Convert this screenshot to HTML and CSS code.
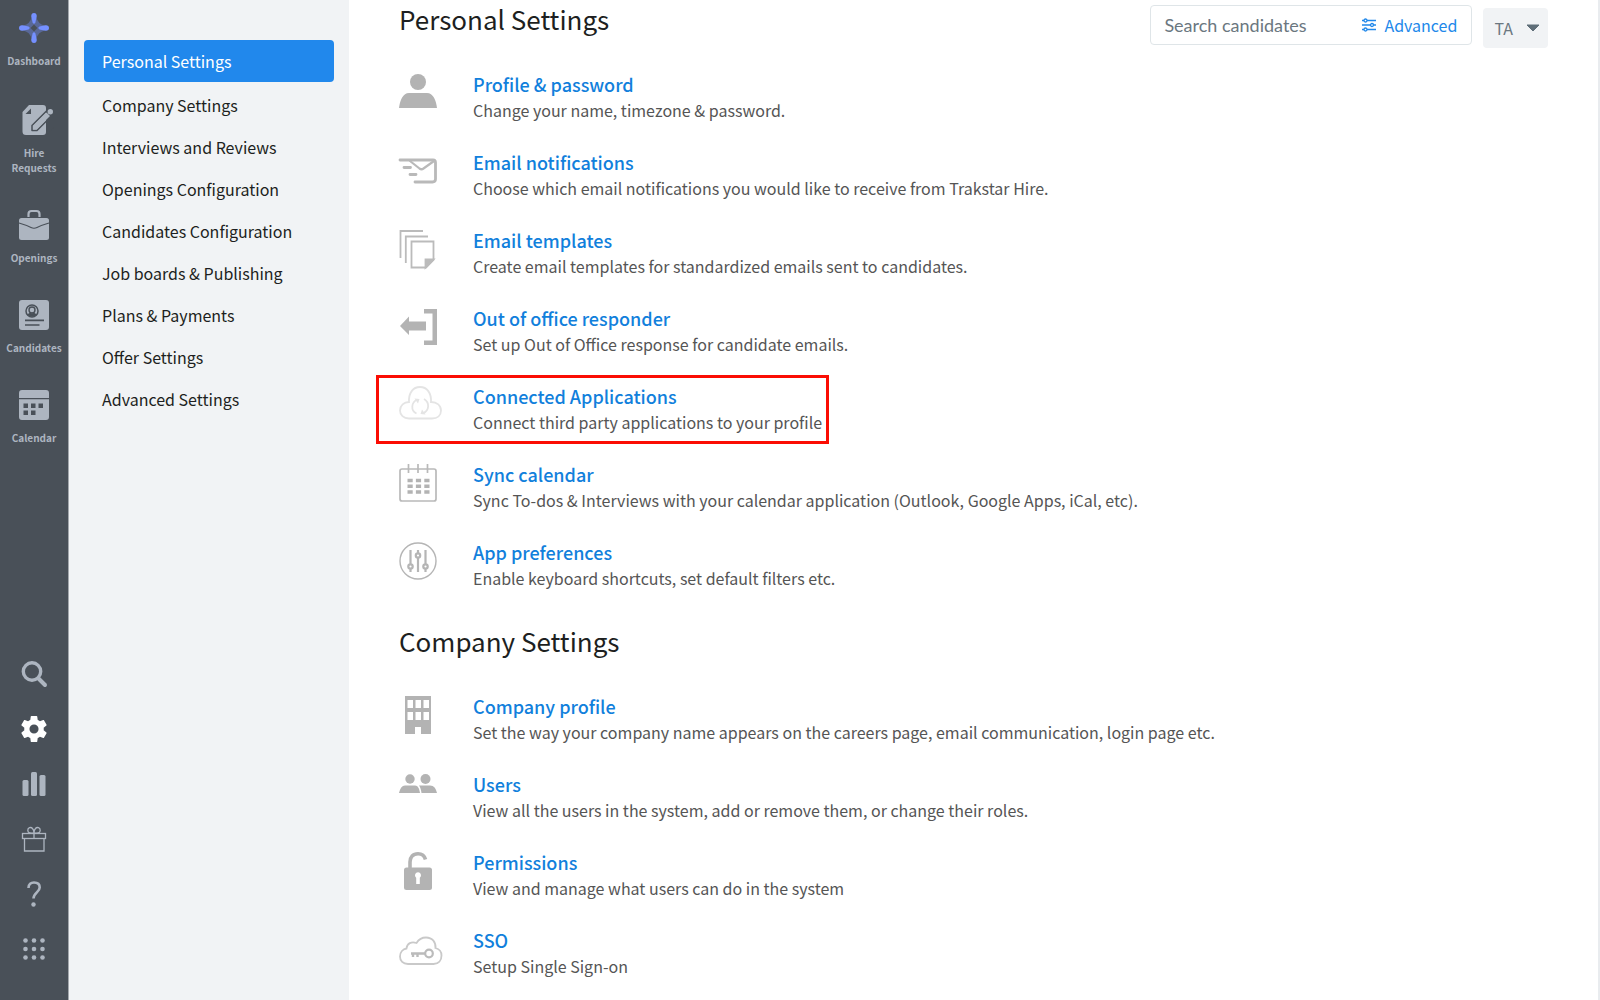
FILE: index.html
```html
<!DOCTYPE html>
<html lang="en">
<head>
<meta charset="UTF-8" />
<meta name="viewport" content="width=device-width, initial-scale=1" />
<title>Settings</title>
<link rel="stylesheet" href="styles.css">
</head>
<body>
  <nav class="rail" aria-label="Main">
    <ul class="rail-main">
      <li class="rail-home">
        <a href="#">
          <svg class="rail-icon" viewBox="0 0 30 30">
            <path d="M15 5Q17 13 25 15Q17 17 15 25Q13 17 5 15Q13 13 15 5Z" fill="#596898" stroke="#596898" stroke-width="5" stroke-linejoin="round"/>
            <path d="M15 11.500L18.500 15L15 18.500L11.500 15Z" fill="#495058"/>
            <g fill="#7590ff">
              <path d="M15 0c2 0 3 1.600 2.700 3.500L16.400 9.500Q15 12 13.600 9.500L12.300 3.500C12 1.600 13 0 15 0z"/>
              <path d="M15 30c2 0 3-1.600 2.700-3.500L16.400 20.500Q15 18 13.600 20.500L12.300 26.500C12 28.400 13 30 15 30z"/>
              <path d="M0 15c0-2 1.600-3 3.500-2.700L9.500 13.600Q12 15 9.500 16.400L3.500 17.700C1.600 18 0 17 0 15z"/>
              <path d="M30 15c0-2-1.600-3-3.500-2.700L20.500 13.600Q18 15 20.500 16.400L26.500 17.700C28.400 18 30 17 30 15z"/>
            </g>
          </svg>
          <span>Dashboard</span>
        </a>
      </li>
      <li>
        <a href="#">
          <svg class="rail-icon" viewBox="0 0 30 30">
            <path d="M10 0h14a3 3 0 0 1 3 3v24a3 3 0 0 1-3 3H7a3.500 3.500 0 0 1-3.500-3.500V7z" fill="#adb5c0"/>
            <path d="M6.500 9L12 3.500V9z" fill="#495058"/>
            <path d="M13 25.500v-5L29 4.500l5 5L18 25.500z" fill="#adb5c0" stroke="#495058" stroke-width="1.500" stroke-linejoin="round"/>
            <path d="M27 11.500V30l9-8V9L30 3h-3z" fill="#495058"/>
            <path d="M14 24.500v-3.500L27.500 7.500l3.500 3.500L17.500 24.500z" fill="#adb5c0"/>
            <circle cx="31.300" cy="6.700" r="2.700" fill="#adb5c0"/>
          </svg>
          <span>Hire Requests</span>
        </a>
      </li>
      <li>
        <a href="#">
          <svg class="rail-icon" viewBox="0 0 30 30">
            <path d="M9.500 7V4a3 3 0 0 1 3-3h5a3 3 0 0 1 3 3v3" fill="none" stroke="#adb5c0" stroke-width="2.200"/>
            <rect y="8" width="30" height="22" rx="2.500" fill="#adb5c0"/>
            <path d="M0 13Q7 15 12 17.500Q15 19 18 17.500Q23 15 30 13" fill="none" stroke="#495058" stroke-width="1.200"/>
          </svg>
          <span>Openings</span>
        </a>
      </li>
      <li>
        <a href="#">
          <svg class="rail-icon" viewBox="0 0 30 30">
            <rect width="30" height="30" rx="3" fill="#adb5c0"/>
            <circle cx="13" cy="11" r="6" fill="none" stroke="#495058" stroke-width="1.500"/>
            <circle cx="13" cy="10" r="3" fill="none" stroke="#495058" stroke-width="1.400"/>
            <path d="M8.500 15Q9 13 11.500 12.500l1.500 1 1.500-1Q17 13 17.500 15Q13 18.500 8.500 15z" fill="#495058"/>
            <path d="M6 20.300h19M6 25h14.500" stroke="#495058" stroke-width="1.700"/>
          </svg>
          <span>Candidates</span>
        </a>
      </li>
      <li>
        <a href="#">
          <svg class="rail-icon" viewBox="0 0 30 30">
            <path d="M0 8V3a3 3 0 0 1 3-3h24a3 3 0 0 1 3 3v5zM0 9.300h30V27a3 3 0 0 1-3 3H3a3 3 0 0 1-3-3z" fill="#adb5c0"/>
            <path d="M4.500 13.500H9V18H4.500zM12 13.500h4.500V18H12zM19.500 13.500H24V18h-4.500zM4.500 20.500H9V25H4.500zM12 20.500h4.500V25H12z" fill="#495058"/>
          </svg>
          <span>Calendar</span>
        </a>
      </li>
    </ul>
    <ul class="rail-tools">
      <li><a href="#" aria-label="Search">
        <svg viewBox="0 0 26 26" fill="none" stroke="#adb5c0"><circle cx="11" cy="10.500" r="8.700" stroke-width="3.400"/><path d="M17.500 17.500L24 24" stroke-width="4" stroke-linecap="round"/></svg>
      </a></li>
      <li><a href="#" aria-label="Settings">
        <svg viewBox="2 2 20 20" fill="#fff"><path d="M19.430 12.980c.04-.32.07-.64.07-.98s-.03-.66-.07-.98l2.110-1.650c.19-.15.24-.42.12-.64l-2-3.460c-.12-.22-.39-.3-.61-.22l-2.490 1c-.52-.4-1.080-.73-1.690-.98l-.38-2.650C14.460 2.180 14.250 2 14 2h-4c-.25 0-.46.18-.49.42l-.38 2.650c-.61.25-1.170.59-1.690.98l-2.490-1c-.23-.09-.49 0-.61.22l-2 3.460c-.13.22-.07.49.12.64l2.110 1.650c-.04.32-.07.65-.07.98s.03.66.07.98l-2.110 1.650c-.19.15-.24.42-.12.64l2 3.460c.12.22.39.3.61.22l2.490-1c.52.4 1.080.73 1.690.98l.38 2.650c.03.24.24.42.49.42h4c.25 0 .46-.18.49-.42l.38-2.650c.61-.25 1.170-.59 1.690-.98l2.490 1c.23.09.49 0 .61-.22l2-3.460c.12-.22.07-.49-.12-.64l-2.110-1.650zM12 15.500a3.500 3.500 0 1 1 0-7 3.500 3.500 0 0 1 0 7z"/></svg>
      </a></li>
      <li><a href="#" aria-label="Reports">
        <svg viewBox="0 0 26 26" fill="#adb5c0"><rect x="1.500" y="9" width="6" height="16" rx="1.500"/><rect x="10" y="1" width="6" height="24" rx="1.500"/><rect x="18.500" y="4" width="6" height="21" rx="1.500"/></svg>
      </a></li>
      <li><a href="#" aria-label="What's new">
        <svg viewBox="0 0 26 26" fill="none" stroke="#adb5c0" stroke-width="1.300"><rect x="1.500" y="7.500" width="23" height="5"/><path d="M3.500 12.500V25h19.500V12.500M13 7.500v5M13 7C11 7 7 8 6.800 4.500C6.600 1.500 10 .700 11.500 2.500C13 4 13 6 13 7zM13 7c2 0 6 1 6.200-2.500C19.400 1.500 16 .700 14.500 2.500C13 4 13 6 13 7z"/></svg>
      </a></li>
      <li><a href="#" aria-label="Help">
        <svg viewBox="0 0 26 26" fill="none" stroke="#adb5c0"><path d="M7.500 7C7.500 3 10 1.500 13 1.500c3.500 0 5.700 2 5.700 5c0 4.500-6.200 5.500-6.200 11" stroke-width="2.600"/><circle cx="12.500" cy="23.500" r="2.200" fill="#adb5c0" stroke="none"/></svg>
      </a></li>
      <li><a href="#" aria-label="Apps">
        <svg viewBox="0 0 26 26" fill="#adb5c0"><circle cx="4.500" cy="4.500" r="2.300"/><circle cx="13" cy="4.500" r="2.300"/><circle cx="21.500" cy="4.500" r="2.300"/><circle cx="4.500" cy="13" r="2.300"/><circle cx="13" cy="13" r="2.300"/><circle cx="21.500" cy="13" r="2.300"/><circle cx="4.500" cy="21.500" r="2.300"/><circle cx="13" cy="21.500" r="2.300"/><circle cx="21.500" cy="21.500" r="2.300"/></svg>
      </a></li>
    </ul>
  </nav>

  <nav class="side-menu" aria-label="Settings sections">
    <a class="active" href="#personal">Personal Settings</a>
    <a href="#company">Company Settings</a>
    <a href="#">Interviews and Reviews</a>
    <a href="#">Openings Configuration</a>
    <a href="#">Candidates Configuration</a>
    <a href="#">Job boards &amp; Publishing</a>
    <a href="#">Plans &amp; Payments</a>
    <a href="#">Offer Settings</a>
    <a href="#">Advanced Settings</a>
  </nav>

  <main class="content">
    <header class="topbar">
      <h2 id="personal">Personal Settings</h2>
      <div class="topbar-tools">
        <form class="search-box">
          <input type="text" name="q" placeholder="Search candidates" aria-label="Search candidates" />
          <a href="#">
            <svg viewBox="0 0 14 14" fill="none" stroke="#2188ea" stroke-width="1.300"><path d="M0 2.500h2M5 2.500h9M0 7h8.500M11.500 7H14M0 11.500h2M5 11.500h9"/><circle cx="3.500" cy="2.500" r="1.500"/><circle cx="10" cy="7" r="1.500"/><circle cx="3.500" cy="11.500" r="1.500"/></svg>
            Advanced
          </a>
        </form>
        <button type="button" class="user-btn">TA
          <svg viewBox="0 0 14 8"><path d="M1 1h12L7 7z" fill="#5f6e78" stroke="#5f6e78" stroke-linejoin="round"/></svg>
        </button>
      </div>
    </header>

    <ul class="settings-list">
      <li>
        <svg viewBox="0 0 44 38" fill="#b3b3b3"><circle cx="19" cy="8" r="8"/><path d="M0 34c1-8 4-15 10-15h18c6 0 9 7 10 15z"/></svg>
        <div><a href="#">Profile &amp; password</a><p>Change your name, timezone &amp; password.</p></div>
      </li>
      <li>
        <svg viewBox="0 0 44 38" fill="none" stroke="#b9b9b9" stroke-linecap="round"><path d="M1 8h33q2.500 0 2.500 2.500V27q0 3-3 3H16" stroke-width="2.800"/><path d="M11 9l9.500 7.500q2 1.500 4 0L35 9" stroke-width="2.200"/><path d="M5 15.500h6.500M11 22.500h6" stroke-width="2.800"/></svg>
        <div><a href="#">Email notifications</a><p>Choose which email notifications you would like to receive from Trakstar Hire.</p></div>
      </li>
      <li>
        <svg viewBox="0 0 44 38" fill="none" stroke="#bbb" stroke-width="1.800"><path d="M1.500 28V1H24M6.800 33V6.500H29"/><path d="M12.500 11.500h22V30L27 37.500H12.500z"/><path d="M26.500 37.500V29.500h8z" fill="#bbb"/></svg>
        <div><a href="#">Email templates</a><p>Create email templates for standardized emails sent to candidates.</p></div>
      </li>
      <li>
        <svg viewBox="0 0 44 38" fill="#b3b3b3"><path d="M1 18L10 8.500V13.500H27v9H10V27zM25 1h13v36H25v-4.500h8.500v-27H25z"/></svg>
        <div><a href="#">Out of office responder</a><p>Set up Out of Office response for candidate emails.</p></div>
      </li>
      <li class="highlight">
        <svg viewBox="0 0 44 38" fill="none" stroke="#e4e4e4" stroke-width="1.800"><path d="M10 32.500C4.500 32.500 1 29 1 24.500c0-5 4-8.500 9-8.500C9.500 7 14 1 21 1S32.500 7 32 16c6 0 10 3.500 10 8.500s-3.500 8-9 8z"/><path d="M18.500 13.500c-6.500 2.500-7 11.500-1 14M23.500 27.500c7-2.500 7.500-11 1.500-14.500"/><path d="M15.500 12.500l5 .5-1.500 4.500zM26.500 28.500l-5-.5 1.500-4.500z" fill="#e4e4e4" stroke="none"/></svg>
        <div><a href="#">Connected Applications</a><p>Connect third party applications to your profile</p></div>
      </li>
      <li>
        <svg viewBox="0 0 44 38"><rect x="1" y="5" width="36" height="32" rx="2" fill="none" stroke="#b9b9b9" stroke-width="1.700"/><path d="M9.500 0v9M19 0v9M28.500 0v9" stroke="#b9b9b9" stroke-width="1.700"/><path d="M8.500 16.500h22M8.500 22.300h22M8.500 28h22" stroke="#b3b3b3" stroke-width="3.400" stroke-dasharray="5.200 3.200"/></svg>
        <div><a href="#">Sync calendar</a><p>Sync To-dos &amp; Interviews with your calendar application (Outlook, Google Apps, iCal, etc).</p></div>
      </li>
      <li>
        <svg viewBox="0 0 44 38" fill="none" stroke="#b5b5b5"><circle cx="19" cy="19" r="18" stroke-width="1.400"/><g stroke-width="2.200"><path d="M11.500 8v14M11.500 27v3M19 8v3M19 16v14M26.500 8v14M26.500 27v3"/><circle cx="11.500" cy="24.500" r="2.200"/><circle cx="19" cy="13.500" r="2.200"/><circle cx="26.500" cy="24.500" r="2.200"/></g></svg>
        <div><a href="#">App preferences</a><p>Enable keyboard shortcuts, set default filters etc.</p></div>
      </li>
    </ul>

    <h2 id="company">Company Settings</h2>
    <ul class="settings-list">
      <li>
        <svg viewBox="0 0 44 38"><path d="M6 0h26v38H22v-7h-6v7H6zM8.500 4v8H14V4zM16.500 4v8H22V4zM24.500 4v8H30V4zM8.500 16v8H14v-8zM16.500 16v8H22v-8zM24.500 16v8H30v-8z" fill="#b3b3b3" fill-rule="evenodd"/></svg>
        <div><a href="#">Company profile</a><p>Set the way your company name appears on the careers page, email communication, login page etc.</p></div>
      </li>
      <li>
        <svg viewBox="0 0 44 38" fill="#b3b3b3"><circle cx="11" cy="5" r="4.700"/><circle cx="26.500" cy="5" r="5"/><path d="M0 19c1-4.500 3-7.500 6-7.500h10c3 0 4.500 3.500 5 7.500zM20 11.500h11c4 0 6 3 7 7.500H22.500c-.5-3-1-5.500-2.500-7.500z"/></svg>
        <div><a href="#">Users</a><p>View all the users in the system, add or remove them, or change their roles.</p></div>
      </li>
      <li>
        <svg viewBox="0 0 44 38"><path d="M11 16V10c0-5 3-8.300 8-8.300c4 0 6.500 2 7.500 5.800" fill="none" stroke="#b3b3b3" stroke-width="3.600"/><rect x="5" y="15.500" width="28" height="22.500" rx="2.500" fill="#b3b3b3"/><path d="M16 23.500a3 3 0 1 1 4.800 2.200V32h-3.600v-6.300A3 3 0 0 1 16 23.500z" fill="#fff"/></svg>
        <div><a href="#">Permissions</a><p>View and manage what users can do in the system</p></div>
      </li>
      <li>
        <svg viewBox="0 0 44 38" fill="none" stroke="#c9c9c9"><path d="M9 34C4 34 1 31 1 26.500c0-4.500 3-7.500 6.500-8c.5-5 5-7.500 10-5.500C20 9 23 7.500 27 7.500c6.500 0 10 5 9.500 10.500c4 1 6 4 6 7.500c0 5-3 8.500-8 8.500z" stroke-width="1.800"/><g stroke="#bbb"><circle cx="30" cy="23.500" r="3.800" stroke-width="2.200"/><path d="M26 23.500H12M14 23v4M18.500 23v4" stroke-width="2.400"/></g></svg>
        <div><a href="#">SSO</a><p>Setup Single Sign-on</p></div>
      </li>
    </ul>
  </main>
</body>
</html>
```
FILE: styles.css
```css
* {
  box-sizing: border-box;
}
body {
  margin: 0;
  min-height: 100vh;
  display: flex;
  background: #fff;
  color: #1d1f21;
  font-family: "Noto Sans CJK SC", "Noto Sans", sans-serif;
  font-size: 16px;
}
ul, p, h2 {
  margin: 0;
  padding: 0;
  list-style: none;
}
a {
  text-decoration: none;
}
svg {
  display: block;
  flex-shrink: 0;
  overflow: visible;
}

/* dark icon rail */
.rail {
  flex: 0 0 69px;
  display: flex;
  flex-direction: column;
  justify-content: space-between;
  padding: 13px 0 38px;
  background: #495058;
  border-right: 1px solid #a3a8ad;
}
.rail-main {
  display: flex;
  flex-direction: column;
  gap: 35px;
}
.rail-home {
  padding-bottom: 2px;
}
.rail-main a {
  display: flex;
  flex-direction: column;
  align-items: center;
  gap: 10px;
  padding: 0 5px;
  color: #adb5c0;
  font-size: 10px;
  font-weight: 700;
  line-height: 15px;
  text-align: center;
}
.rail-icon {
  width: 30px;
  height: 30px;
}
.rail-tools {
  display: flex;
  flex-direction: column;
  align-items: center;
  gap: 29px;
}
.rail-tools svg {
  width: 26px;
  height: 26px;
}

/* settings sections */
.side-menu {
  flex: 0 0 280px;
  display: flex;
  flex-direction: column;
  padding: 40px 15px;
  background: #f1f3f5;
}
.side-menu a {
  padding: 0 18px;
  border-radius: 4px;
  color: #1d1f21;
  line-height: 42px;
}
.side-menu .active {
  margin-bottom: 2px;
  background: #2188ec;
  color: #fff;
}

.content {
  flex: 1;
  padding: 0 50px;
  border-right: 2px solid #e9ecef;
}
h2 {
  font-size: 26px;
  font-weight: 400;
  line-height: 38px;
}
.topbar {
  display: flex;
  justify-content: space-between;
  align-items: flex-start;
  height: 38px;
}
.topbar-tools {
  display: flex;
  align-items: flex-start;
  gap: 11px;
  padding-top: 5px;
}
.search-box {
  width: 322px;
  height: 40px;
  display: flex;
  align-items: center;
  padding: 0 14px 0 13px;
  border: 1px solid #dfe5e8;
  border-radius: 4px;
}
.search-box input {
  flex: 1;
  min-width: 0;
  padding: 0;
  border: none;
  outline: none;
  font-family: Lato, sans-serif;
  font-size: 18px;
}
.search-box input::placeholder {
  color: #6b7780;
}
.search-box a {
  display: flex;
  align-items: center;
  gap: 8px;
  color: #2188ea;
}
.search-box svg {
  width: 14px;
  height: 14px;
}
.user-btn {
  display: flex;
  align-items: center;
  gap: 13px;
  height: 40px;
  margin-top: 3px;
  padding: 0 8px 0 11px;
  border: none;
  border-radius: 4px;
  background: #f1f3f5;
  color: #6b7780;
  font: inherit;
  cursor: pointer;
}
.user-btn svg {
  width: 14px;
  height: 8px;
}

.settings-list {
  display: flex;
  flex-direction: column;
  align-items: flex-start;
  gap: 26px;
  padding: 33px 0 31px;
}
.settings-list:last-child {
  padding-bottom: 0;
}
.settings-list li {
  display: flex;
  gap: 30px;
}
.settings-list svg {
  width: 44px;
  height: 38px;
  margin-top: 3px;
}
.settings-list a {
  display: block;
  color: #1180dc;
  font-size: 18px;
  font-weight: 500;
  line-height: 26px;
}
.settings-list p {
  color: #555;
  line-height: 26px;
}

/* red callout around a row */
.highlight {
  position: relative;
}
.highlight::after {
  content: "";
  position: absolute;
  inset: -8px -7px -9px -23px;
  border: 3px solid #fb0d04;
  pointer-events: none;
}
```
